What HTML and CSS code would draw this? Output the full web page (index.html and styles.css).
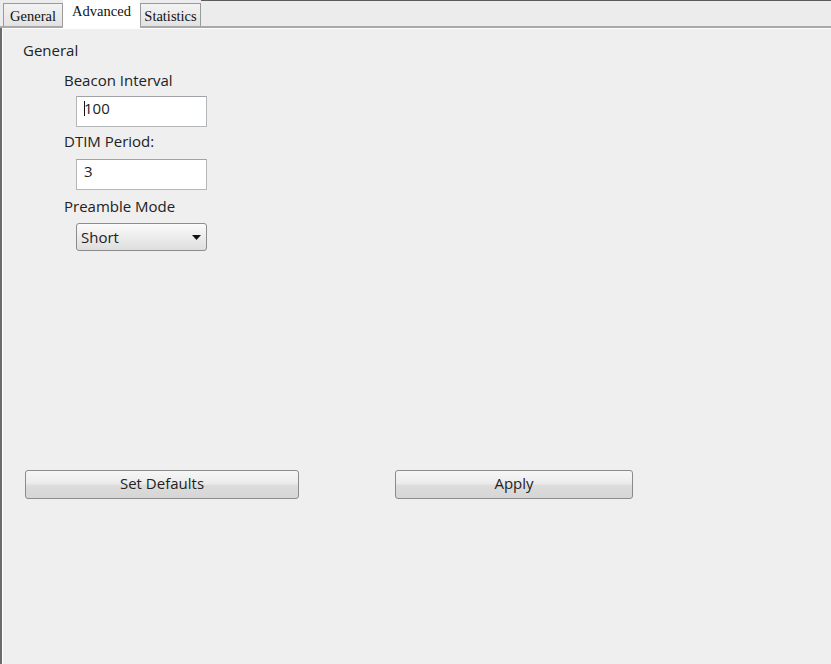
FILE: index.html
```html
<!DOCTYPE html>
<html>
<head>
<meta charset="utf-8">
<title>Advanced</title>
<link rel="stylesheet" href="styles.css">
</head>
<body>
<div class="window">
  <div class="tabbar">
    <div class="tab">General</div>
    <div class="tab tab-active">Advanced</div>
    <div class="tab">Statistics</div>
    <div class="tabbar-fill"></div>
  </div>
  <div class="panel">
    <div class="panel-inner">
      <div class="group-title">General</div>
      <div class="fields">
        <div class="label label-first">Beacon Interval</div>
        <div class="textbox textbox-first"><span class="caret"></span>100</div>
        <div class="label label-second">DTIM Period:</div>
        <div class="textbox textbox-second">3</div>
        <div class="label label-third">Preamble Mode</div>
        <div class="select">
          <span class="select-text">Short</span>
          <svg class="select-arrow" width="9" height="5" viewBox="0 0 9 5"><polygon points="0,0 9,0 4.5,5" fill="#111"/></svg>
        </div>
      </div>
      <div class="buttons">
        <div class="button button-defaults">Set Defaults</div>
        <div class="button button-apply">Apply</div>
      </div>
    </div>
  </div>
</div>
</body>
</html>
```
FILE: styles.css
```css
html, body {
  margin: 0;
  padding: 0;
}
body {
  background: #efefef;
  width: 831px;
  height: 664px;
  overflow: hidden;
  font-family: "Open Sans", "DejaVu Sans", sans-serif;
  font-size: 15px;
  line-height: 20px;
  color: #222;
}
.window {
  display: flex;
  flex-direction: column;
  height: 664px;
}
.tabbar {
  display: flex;
  align-items: flex-end;
  height: 26px;
  padding-left: 3px;
  border-bottom: 2px solid #a9a9a9;
  background: #ececec;
}
.tab {
  box-sizing: border-box;
  height: 23px;
  padding-top: 2px;
  border: 1px solid #9a9a9a;
  border-bottom: none;
  background: linear-gradient(#f3f3f3, #e2e2e2);
  font-family: "Liberation Serif", "DejaVu Serif", serif;
  font-size: 14.5px;
  line-height: 20px;
  color: #111;
  text-align: center;
  width: 60px;
}
.tab:nth-child(3) {
  width: 61px;
}
.tab-active {
  width: 77px;
  height: 28px;
  margin-bottom: -2px;
  border: none;
  background: #ffffff;
  padding-top: 1px;
}
.tabbar-fill {
  flex: 1;
  align-self: stretch;
  border-top: 1px solid #5c5c5c;
}
.panel {
  flex: 1;
  border-left: 2px solid #6b6b6b;
}
.panel-inner {
  height: 100%;
  box-sizing: border-box;
  border-left: 1px solid #ffffff;
  border-top: 1px solid #ffffff;
  padding-top: 12px;
  padding-left: 20px;
}
.group-title {
  height: 20px;
  line-height: 18px;
}
.fields {
  display: flex;
  flex-direction: column;
  align-items: flex-start;
  padding-left: 41px;
}
.label {
  height: 20px;
  line-height: 18px;
}
.label-first { margin-top: 10px; }
.label-second { margin-top: 5px; }
.label-third { margin-top: 7px; }
.textbox {
  box-sizing: border-box;
  width: 131px;
  height: 31px;
  margin-left: 12px;
  padding-left: 7px;
  border: 1px solid #b3b7ba;
  border-top-color: #a0a4a8;
  background: #ffffff;
  line-height: 23px;
  color: #222;
}
.textbox-first { margin-top: 5px; }
.textbox-second { margin-top: 7px; }
.caret {
  display: inline-block;
  width: 1px;
  height: 15px;
  background: #111;
  vertical-align: -2px;
  margin-right: -1px;
}
.select {
  box-sizing: border-box;
  width: 131px;
  height: 28px;
  margin-top: 6px;
  margin-left: 12px;
  padding: 0 5px 0 4px;
  border: 1px solid #8c8c8c;
  border-radius: 3px;
  background: linear-gradient(#fbfbfb, #ececec 50%, #dedede);
  display: flex;
  align-items: center;
  justify-content: space-between;
  line-height: 26px;
  color: #222;
}
.select-text {
  height: 26px;
}
.select-arrow {
  display: block;
  margin-top: 1px;
}
.buttons {
  display: flex;
  margin-top: 219px;
  padding-left: 2px;
  gap: 96px;
}
.button {
  box-sizing: border-box;
  height: 29px;
  border: 1px solid #8b8b8b;
  border-radius: 3px;
  background: linear-gradient(#f6f6f6, #ececec 45%, #dcdcdc 55%, #d6d6d6);
  text-align: center;
  line-height: 25px;
  color: #222;
}
.button-defaults { width: 274px; }
.button-apply { width: 238px; }
```
